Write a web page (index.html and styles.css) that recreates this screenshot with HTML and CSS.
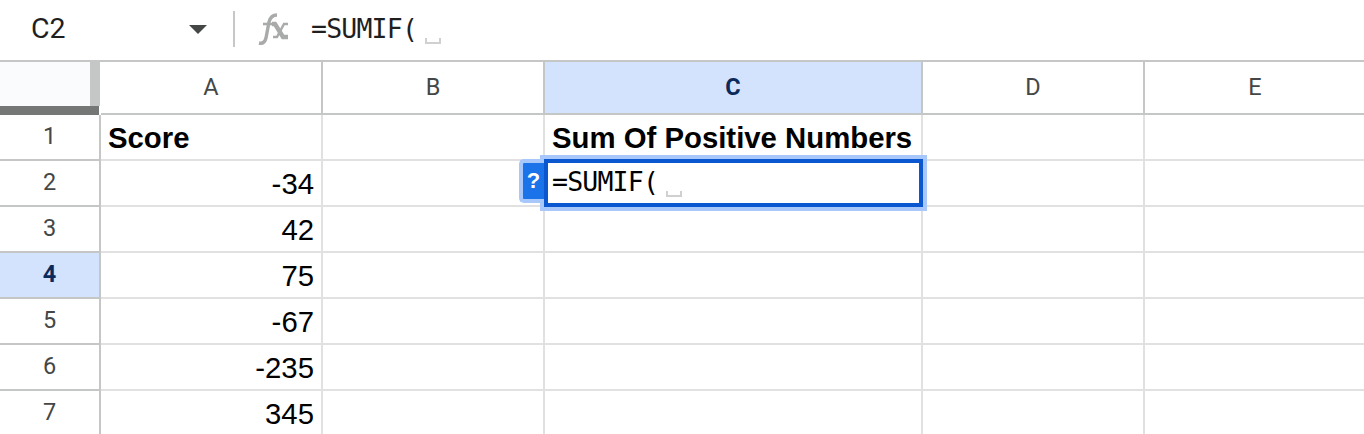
FILE: index.html
```html
<html>

<head>
    <link rel="stylesheet" href="styles.css">
</head>

<body>
    <div class="formula-bar">
        <div class="name-box">
            <span class="name-box-value">C2</span>
            <span class="name-box-arrow"></span>
        </div>
        <div class="bar-divider"></div>
        <svg class="fx-icon" width="32" height="32" viewBox="0 0 32 32">
            <path d="M1 30c4 1 6-1 7-5l3-16c1-4 3-7 8-7" fill="none" stroke="#a9abaa" stroke-width="3.4" />
            <path d="M5 11h10" fill="none" stroke="#a9abaa" stroke-width="2.6" />
            <path d="M14 11h3l8 13h5" fill="none" stroke="#a9abaa" stroke-width="4.4" />
            <path d="M15 24h4l7-13h4" fill="none" stroke="#a9abaa" stroke-width="2.4" />
        </svg>
        <div class="formula-text">=SUMIF(<span class="arg-mark"></span></div>
    </div>

    <div class="sheet">
        <div class="corner">
            <div class="corner-fill"></div>
        </div>
        <div class="col-head">A</div>
        <div class="col-head">B</div>
        <div class="col-head is-active">C</div>
        <div class="col-head">D</div>
        <div class="col-head">E</div>

        <div class="row-head">1</div>
        <div class="cell is-bold">Score</div>
        <div class="cell"></div>
        <div class="cell is-bold">Sum Of Positive Numbers</div>
        <div class="cell"></div>
        <div class="cell"></div>

        <div class="row-head">2</div>
        <div class="cell is-num">-34</div>
        <div class="cell"></div>
        <div class="cell is-editing">
            <div class="editor">
                <span class="editor-help">?</span>
                <div class="editor-text">=SUMIF(<span class="arg-mark"></span></div>
            </div>
        </div>
        <div class="cell"></div>
        <div class="cell"></div>

        <div class="row-head">3</div>
        <div class="cell is-num">42</div>
        <div class="cell"></div>
        <div class="cell"></div>
        <div class="cell"></div>
        <div class="cell"></div>

        <div class="row-head is-active">4</div>
        <div class="cell is-num">75</div>
        <div class="cell"></div>
        <div class="cell"></div>
        <div class="cell"></div>
        <div class="cell"></div>

        <div class="row-head">5</div>
        <div class="cell is-num">-67</div>
        <div class="cell"></div>
        <div class="cell"></div>
        <div class="cell"></div>
        <div class="cell"></div>

        <div class="row-head">6</div>
        <div class="cell is-num">-235</div>
        <div class="cell"></div>
        <div class="cell"></div>
        <div class="cell"></div>
        <div class="cell"></div>

        <div class="row-head">7</div>
        <div class="cell is-num">345</div>
        <div class="cell"></div>
        <div class="cell"></div>
        <div class="cell"></div>
        <div class="cell"></div>
    </div>
</body>

</html>
```

FILE: styles.css
```css
* {
    box-sizing: border-box;
}

html,
body {
    height: 434px;
    margin: 0;
    overflow: hidden;
}

body {
    background: #fff;
    font-family: 'Liberation Sans', sans-serif;
}

.formula-bar {
    align-items: center;
    border-bottom: solid 2px #c4c7c5;
    display: flex;
    height: 62px;
    padding-bottom: 2px;
}

.name-box {
    align-items: center;
    display: flex;
    justify-content: space-between;
    padding: 0 26px 0 31px;
    width: 233px;
}

.name-box-value {
    color: #1f1f1f;
    font-family: Roboto, sans-serif;
    font-size: 28.5px;
    margin-bottom: 2px;
}

.name-box-arrow {
    border-left: solid 9px transparent;
    border-right: solid 9px transparent;
    border-top: solid 9px #444746;
}

.bar-divider {
    background: #c7c7c7;
    height: 36px;
    width: 2px;
}

.fx-icon {
    margin-left: 23px;
}

.formula-text {
    color: #1f1f1f;
    font-family: 'DejaVu Sans Mono', monospace;
    font-size: 26.5px;
    letter-spacing: -.8px;
    margin: 0 0 2px 21px;
    white-space: nowrap;
}

.arg-mark {
    border: solid 2px #d0d0d0;
    border-top: 0;
    display: inline-block;
    height: 6px;
    margin-left: 8px;
    vertical-align: -6px;
    width: 16px;
}

.sheet {
    display: grid;
    grid-template-columns: 101px 222px 222px 378px 222px 222px;
    grid-template-rows: 53px repeat(7, 46px);
}

.corner {
    background: #f9fbfd;
    border-bottom: solid 9px #747775;
    margin-right: 2px;
}

.corner-fill {
    border-right: solid 10px #c4c7c5;
    height: 100%;
    margin-right: -1px;
}

.col-head,
.row-head {
    align-items: center;
    border-bottom: solid 2px #c4c7c5;
    border-right: solid 2px #c4c7c5;
    color: #444746;
    display: flex;
    font-family: Roboto, sans-serif;
    font-size: 23.5px;
    justify-content: center;
    padding-bottom: 2px;
}

.col-head.is-active,
.row-head.is-active {
    background: #d3e3fd;
    color: #0b2a5c;
    font-weight: 700;
}

.cell {
    align-items: flex-end;
    border-bottom: solid 2px #e1e1e1;
    border-right: solid 2px #e1e1e1;
    color: #000;
    display: flex;
    font-size: 29.33px;
    line-height: 34px;
    padding: 0 7px 4px;
    white-space: nowrap;
}

.is-bold {
    font-weight: 700;
}

.is-num {
    justify-content: flex-end;
}

.is-editing {
    position: relative;
}

.editor {
    background: #fff;
    border: solid 4px #0b57d0;
    bottom: -2px;
    box-shadow: 0 0 0 4px #a8c7fa;
    left: -1px;
    position: absolute;
    right: -2px;
    top: -2px;
}

.editor-help {
    align-items: center;
    background: #1a73e8;
    border: solid 4px #a8c7fa;
    border-radius: 5px 0 0 5px;
    border-right: 0;
    color: #fff;
    display: flex;
    font-size: 22px;
    font-weight: 700;
    height: 44px;
    justify-content: center;
    left: -29px;
    position: absolute;
    top: -4px;
    width: 25px;
}

.editor-text {
    font-family: 'DejaVu Sans Mono', monospace;
    font-size: 26.5px;
    letter-spacing: -.8px;
    line-height: 38px;
    padding-left: 4px;
}
```
